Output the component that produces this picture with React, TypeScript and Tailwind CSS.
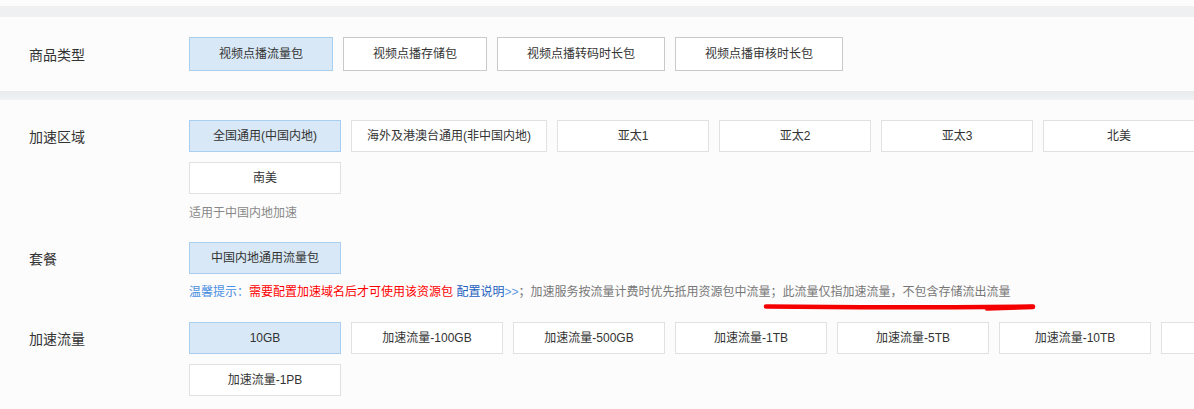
const font = { fontFamily: '"Liberation Sans", "Noto Sans CJK SC", sans-serif' };

type OptProps = {
  label: string;
  active?: boolean;
  dark?: boolean;
  fixed?: boolean;
};

function Opt({ label, active, dark, fixed }: OptProps) {
  const base = "flex items-center justify-center text-[12px] text-[#333] border shrink-0";
  const size = fixed ? "h-[32px] min-w-[152px] px-[15px]" : "h-[34px] px-[29px]";
  const color = active
    ? "bg-[#d8e8f6] border-[#a9cff0]"
    : dark
    ? "bg-white border-[#c9c9c9]"
    : "bg-white border-[#e1e1e1]";
  return <div className={`${base} ${size} ${color}`}>{label}</div>;
}

function Row({ title, children }: { title: string; children: React.ReactNode }) {
  return (
    <div className="flex">
      <div className="w-[189px] shrink-0 pl-[29px] pt-[3px] h-[32px] flex items-center text-[14px] text-[#333]">
        {title}
      </div>
      <div className="w-[1140px] shrink-0">{children}</div>
    </div>
  );
}

const regions = ["全国通用(中国内地)", "海外及港澳台通用(非中国内地)", "亚太1", "亚太2", "亚太3", "北美", "南美"];
const flows = ["10GB", "加速流量-100GB", "加速流量-500GB", "加速流量-1TB", "加速流量-5TB", "加速流量-10TB", "加速流量-50TB", "加速流量-1PB"];

export default function App() {
  return (
    <div className="w-[1194px] h-[409px] overflow-hidden bg-[#fcfcfc]" style={font}>
      <div className="h-[6px]" />
      <div className="h-[11px] bg-[#eff0f2]" />

      {/* 商品类型 */}
      <div className="flex pt-[20px] pb-[20px]">
        <div className="w-[189px] shrink-0 pl-[29px] pt-[3px] flex items-center text-[14px] text-[#333]">
          商品类型
        </div>
        <div className="flex gap-[10px]">
          <Opt label="视频点播流量包" active />
          <Opt label="视频点播存储包" dark />
          <Opt label="视频点播转码时长包" dark />
          <Opt label="视频点播审核时长包" dark />
        </div>
      </div>

      <div className="h-[9px] bg-gradient-to-b from-[#e9eaec] to-[#f1f2f4]" />

      <div className="pt-[20px] relative">
        <Row title="加速区域">
          <div className="flex flex-wrap gap-[10px]">
            {regions.map((r, i) => (
              <Opt key={r} label={r} active={i === 0} fixed />
            ))}
          </div>
          <div className="mt-[10px] leading-[18px] text-[12px] text-[#888]">适用于中国内地加速</div>
        </Row>

        <div className="mt-[20px]">
          <Row title="套餐">
            <div className="flex">
              <Opt label="中国内地通用流量包" active fixed />
            </div>
            <div className="mt-[9px] leading-[18px] text-[12px] text-[#777] whitespace-nowrap relative">
              <span className="text-[#4a8fe0]">温馨提示：</span>
              <span className="text-[#ff0000]">需要配置加速域名后才可使用该资源包</span>{" "}
              <span className="text-[#1d5fbf]">配置说明</span>
              <span className="text-[#5c9ae6]">&gt;&gt;</span>
              ；加速服务按流量计费时优先抵用资源包中流量；此流量仅指加速流量，不包含存储流出流量
              <svg
                className="absolute left-[574px] top-[19px]"
                width="276"
                height="11"
                viewBox="0 0 276 11"
              >
                <path d="M3 4.5 C 80 5.5, 180 5.5, 270 4.5" stroke="#f40000" strokeWidth="4.5" strokeLinecap="round" fill="none" />
                <path d="M224 6.5 L 270 5" stroke="#f40000" strokeWidth="4.5" strokeLinecap="round" fill="none" />
              </svg>
            </div>
          </Row>
        </div>

        <div className="mt-[21px]">
          <Row title="加速流量">
            <div className="flex flex-wrap gap-[10px]">
              {flows.map((f, i) => (
                <Opt key={f} label={f} active={i === 0} fixed />
              ))}
            </div>
          </Row>
        </div>
      </div>
    </div>
  );
}
